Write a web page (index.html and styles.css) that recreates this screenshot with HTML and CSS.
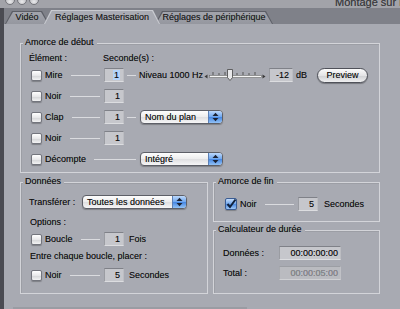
FILE: index.html
```html
<!DOCTYPE html>
<html lang="fr">
<head>
  <meta charset="UTF-8" />
  <title>Réglages Masterisation</title>
  <link rel="stylesheet" href="styles.css">
</head>
<body>

  <div class="titlebar">
    <span class="light"></span>
    <span class="light"></span>
    <span class="light"></span>
    <span class="win-title">Montage sur bande</span>
  </div>

  <div class="tabbar">
    <span class="tab tab-video"><span class="tab-in">Vidéo</span></span>
    <span class="tab tab-active"><span class="tab-in">Réglages Masterisation</span></span>
    <span class="tab tab-device"><span class="tab-in">Réglages de périphérique</span></span>
  </div>

  <div class="panel">

    <div class="group group-start">
      <span class="group-title">Amorce de début</span>
      <div class="head">
        <span class="head-elem">Élément :</span>
        <span>Seconde(s) :</span>
      </div>
      <div class="grid">
        <div class="cell-left">
          <span class="check"></span><span class="lbl">Mire</span><span class="wire"></span>
        </div>
        <span class="field"><span class="sel">1</span></span>
        <span class="link"></span>
        <div class="extra">
          <span>Niveau 1000 Hz</span>
          <svg class="slider" width="62" height="14" viewBox="0 0 62 14">
            <polygon points="0.5,8.5 3.5,6.5 3.5,10.5" fill="#3a3a3a" />
            <line x1="9" y1="4" x2="9" y2="7" stroke="#555" />
            <line x1="15" y1="5" x2="15" y2="7" stroke="#555" />
            <line x1="21" y1="4" x2="21" y2="7" stroke="#555" />
            <line x1="33" y1="5" x2="33" y2="7" stroke="#555" />
            <line x1="39" y1="4" x2="39" y2="7" stroke="#555" />
            <line x1="45" y1="5" x2="45" y2="7" stroke="#555" />
            <line x1="51" y1="4" x2="51" y2="7" stroke="#555" />
            <rect x="5.5" y="7.5" width="52" height="2" fill="#f4f4f4" stroke="#6a6a6a" stroke-width="0.6" />
            <path d="M23.5 1.5 h5 v8 l-2.5 3 l-2.5 -3 z" fill="#e8e8ea" stroke="#444" stroke-width="0.8" />
            <polygon points="58.5,6.5 61.5,8.5 58.5,10.5" fill="#3a3a3a" />
          </svg>
          <span class="field field-db">-12</span>
          <span class="unit">dB</span>
          <span class="btn">Preview</span>
        </div>

        <div class="cell-left">
          <span class="check"></span><span class="lbl">Noir</span><span class="wire"></span>
        </div>
        <span class="field">1</span>
        <span></span>
        <span></span>

        <div class="cell-left">
          <span class="check"></span><span class="lbl">Clap</span><span class="wire"></span>
        </div>
        <span class="field">1</span>
        <span class="link"></span>
        <div class="extra">
          <span class="popup"><span class="popup-txt">Nom du plan</span><span class="arrows"><svg width="7" height="10" viewBox="0 0 7 10"><polygon points="0.5,4 3.5,0.8 6.5,4" fill="#1b2233" /><polygon points="0.5,6 3.5,9.2 6.5,6" fill="#1b2233" /></svg></span></span>
        </div>

        <div class="cell-left">
          <span class="check"></span><span class="lbl">Noir</span><span class="wire"></span>
        </div>
        <span class="field">1</span>
        <span></span>
        <span></span>

        <div class="cell-left span-left">
          <span class="check"></span><span class="lbl">Décompte</span><span class="wire"></span>
        </div>
        <div class="extra">
          <span class="popup"><span class="popup-txt">Intégré</span><span class="arrows"><svg width="7" height="10" viewBox="0 0 7 10"><polygon points="0.5,4 3.5,0.8 6.5,4" fill="#1b2233" /><polygon points="0.5,6 3.5,9.2 6.5,6" fill="#1b2233" /></svg></span></span>
        </div>
      </div>
    </div>

    <div class="bottom">

      <div class="group group-data">
        <span class="group-title">Données</span>
        <div class="row">
          <span class="transfer-lbl">Transférer :</span>
          <span class="popup popup-wide"><span class="popup-txt">Toutes les données</span><span class="arrows"><svg width="7" height="10" viewBox="0 0 7 10"><polygon points="0.5,4 3.5,0.8 6.5,4" fill="#1b2233" /><polygon points="0.5,6 3.5,9.2 6.5,6" fill="#1b2233" /></svg></span></span>
        </div>
        <div class="sub sub-options">Options :</div>
        <div class="row row-check row-loop">
          <div class="cell-left">
            <span class="check"></span><span class="lbl">Boucle</span><span class="wire"></span>
          </div>
          <span class="field">1</span>
          <span class="after">Fois</span>
        </div>
        <div class="sub sub-between">Entre chaque boucle, placer :</div>
        <div class="row row-check row-black">
          <div class="cell-left">
            <span class="check"></span><span class="lbl">Noir</span><span class="wire"></span>
          </div>
          <span class="field">5</span>
          <span class="after">Secondes</span>
        </div>
      </div>

      <div class="col">
        <div class="group group-end">
          <span class="group-title">Amorce de fin</span>
          <div class="row">
            <div class="cell-left">
              <span class="check checked"><svg width="12" height="12" viewBox="0 0 12 12"><path d="M2.5 6 L5 9 L10.5 1.5" fill="none" stroke="#10203a" stroke-width="2" /></svg></span><span class="lbl">Noir</span><span class="wire"></span>
            </div>
            <span class="field">5</span>
            <span class="after after-end">Secondes</span>
          </div>
        </div>

        <div class="group group-calc">
          <span class="group-title">Calculateur de durée</span>
          <div class="row">
            <span class="calc-lbl">Données :</span>
            <span class="field field-time">00:00:00:00</span>
          </div>
          <div class="row row-total">
            <span class="calc-lbl">Total :</span>
            <span class="field field-time field-off">00:00:05:00</span>
          </div>
        </div>
      </div>

    </div>
    <div class="foot"></div>
  </div>

</body>
</html>
```

FILE: styles.css
```css
:root {
  --panel: #a8aab2;
  --tabbar: #7f8189;
  --tab: #9b9da5;
  --text: #101010;
  --line: #dadbdf;
  --field: #c6c7cc;
}

* {
  box-sizing: border-box;
}

body {
  margin: 0;
  width: 400px;
  height: 309px;
  overflow: hidden;
  font-family: 'Liberation Sans', Arial, sans-serif;
  font-size: 9px;
  color: var(--text);
  text-shadow: 0 0 0.4px rgba(0, 0, 0, 0.45);
  background-color: var(--panel);
}

/* barre de titre */
.titlebar {
  height: 8px;
  background-color: #a2a3a9;
  display: flex;
  align-items: flex-end;
  overflow: hidden;
  padding-left: 5px;
}

.light {
  flex-shrink: 0;
  width: 10px;
  height: 10px;
  border-radius: 50%;
  border: 1px solid #74757b;
  background: radial-gradient(circle at 50% 70%, #eaeaec, #a7a8ad);
  align-self: flex-start;
  margin-top: -5px;
  margin-right: 2px;
}

.win-title {
  flex-shrink: 0;
  white-space: nowrap;
  margin-left: 294px;
  font-size: 11px;
  line-height: 12px;
  color: #3c3c40;
}

/* onglets */
.tabbar {
  height: 16px;
  background-color: var(--tabbar);
  border-left: 4px solid #4a4b52;
  display: flex;
  align-items: flex-end;
  padding-left: 1px;
}

.tab {
  height: 13px;
  background-color: #5c5e66;
  clip-path: polygon(0 100%, 7px 0, calc(100% - 7px) 0, 100% 100%);
}

.tab-in {
  display: block;
  height: 100%;
  line-height: 13px;
  text-align: center;
  color: #1e1e1e;
  background: linear-gradient(#a3a5ad, #95979f);
  clip-path: polygon(1px 100%, 8px 1px, calc(100% - 8px) 1px, calc(100% - 1px) 100%);
}

.tab-video { width: 44px; }

.tab-active {
  position: relative;
  z-index: 1;
  width: 116px;
  height: 14px;
  margin-left: -5px;
  background-color: #c9cbd1;
}

.tab-active .tab-in {
  line-height: 14px;
  background: var(--panel);
}

.tab-device {
  width: 118px;
  margin-left: -5px;
}

/* panneau */
.panel {
  height: 285px;
  border-left: 4px solid #4a4b52;
  padding: 19px 0 0 16px;
}

.group {
  position: relative;
  border: 1px solid #d3d4d9;
  box-shadow: inset 1px 1px 0 rgba(0, 0, 0, 0.07);
}

.group-title {
  position: absolute;
  top: -7px;
  left: 2px;
  padding: 0 3px 0 2px;
  line-height: 11px;
  background-color: var(--panel);
}

.group-start {
  width: 360px;
  height: 130px;
  padding: 7px 0 0 10px;
}

.head {
  display: flex;
  height: 14px;
  line-height: 14px;
  margin-left: -2px;
  margin-bottom: 3px;
}

.head-elem { width: 74px; }

.grid {
  display: grid;
  grid-template-columns: 73px 20px 15px auto;
  grid-auto-rows: 14px;
  row-gap: 7px;
  align-items: center;
}

.cell-left {
  display: flex;
  align-items: center;
  width: 73px;
}

.span-left {
  grid-column: 1 / 4;
  width: auto;
}

.check {
  flex-shrink: 0;
  width: 11px;
  height: 11px;
  border: 1px solid #73757d;
  border-radius: 2px;
  background: linear-gradient(#ffffff, #e6e6e8 55%, #d6d7d9 56%, #f3f3f4);
  box-shadow: 0 1px 1px rgba(0, 0, 0, 0.25);
}

.check.checked {
  width: 12px;
  height: 12px;
  border-color: #3a5c93;
  background: linear-gradient(#c4dcfa, #72a7ec 50%, #4a88e0 51%, #9cc6f6);
}

.check svg {
  display: block;
  margin: -1px 0 0 -1px;
}

.lbl {
  margin-left: 3px;
  white-space: nowrap;
}

.wire {
  flex: 1;
  height: 1px;
  background-color: var(--line);
  margin: 0 4px 0 8px;
}

.span-left .wire { margin-right: 3px; }

.link {
  height: 1px;
  background-color: var(--line);
  margin: 0 3px;
}

.field {
  flex-shrink: 0;
  width: 20px;
  height: 14px;
  line-height: 12px;
  text-align: right;
  padding-right: 3px;
  background-color: var(--field);
  border: 1px solid;
  border-color: #7f8188 #bcbdc2 #dcdde0 #9a9ca2;
  white-space: nowrap;
}

.sel {
  background-color: #b3d3fb;
  padding: 0 1px;
}

.extra {
  display: flex;
  align-items: center;
  white-space: nowrap;
}

.slider {
  display: block;
  margin-left: 1px;
}

.field-db {
  width: 24px;
  margin-left: 3px;
}

.unit { margin-left: 3px; }

.btn {
  margin-left: 10px;
  width: 51px;
  height: 15px;
  line-height: 13px;
  text-align: center;
  border: 1px solid #4f5159;
  border-radius: 8px;
  background: linear-gradient(#fbfbfb, #e4e4e6 50%, #cfd0d3 51%, #efeff0);
  box-shadow: 0 1px 1px rgba(0, 0, 0, 0.3);
}

/* menus local */
.popup {
  display: flex;
  width: 83px;
  height: 14px;
  margin-left: 1px;
  border: 1px solid #5d5f67;
  border-radius: 4px;
  overflow: hidden;
  background: linear-gradient(#fdfdfd, #ececed 50%, #dedee0 51%, #f6f6f7);
  box-shadow: 0 1px 1px rgba(0, 0, 0, 0.25);
}

.popup-txt {
  flex: 1;
  padding-left: 4px;
  line-height: 12px;
  white-space: nowrap;
}

.arrows {
  width: 14px;
  display: flex;
  align-items: center;
  justify-content: center;
  border-left: 1px solid #5b7fb5;
  background: linear-gradient(#bcd8fb, #6ea6ee 50%, #4385e2 51%, #92c2f6);
}

.arrows svg { display: block; }

/* bas */
.bottom {
  display: flex;
  gap: 5px;
  margin-top: 9px;
}

.group-data {
  width: 188px;
  height: 112px;
  padding: 12px 0 0 8px;
}

.row {
  display: flex;
  align-items: center;
  height: 14px;
}

.transfer-lbl { width: 53px; }

.popup-wide {
  width: 105px;
  margin-left: 0;
}

.sub {
  line-height: 11px;
  margin-left: 1px;
}

.sub-options { margin-top: 8px; }
.sub-between { margin-top: 5px; }

.row-check { padding-left: 2px; }
.row-loop { margin-top: 4px; }
.row-black { margin-top: 6px; }

.after { margin-left: 5px; }
.after-end { margin-left: 6px; }

.col {
  display: flex;
  flex-direction: column;
  gap: 8px;
  width: 167px;
}

.group-end {
  height: 40px;
  padding: 14px 0 0 11px;
}

.group-calc {
  height: 64px;
  padding: 15px 0 0 9px;
}

.calc-lbl { width: 56px; }

.field-time {
  width: 62px;
  padding-right: 2px;
}

.row-total { margin-top: 6px; }

.field-off {
  color: #8c8d92;
  background-color: #babbc0;
  border-color: #9c9ea4 #c0c1c6 #d0d1d4 #a8aaaf;
}

.foot {
  width: 234px;
  height: 2px;
  margin: 13px 0 0 -7px;
  background-color: #9a9ca3;
}
```
